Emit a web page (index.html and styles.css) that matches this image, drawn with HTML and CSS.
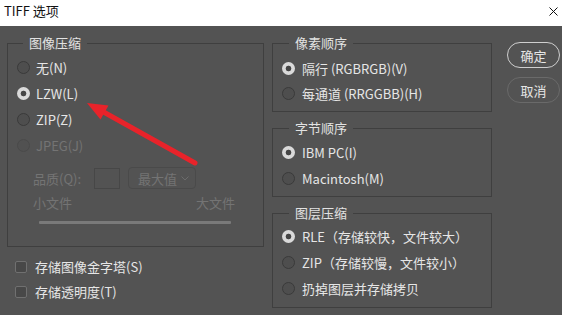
FILE: index.html
```html
<!DOCTYPE html>
<html>
<head>
    <meta charset="utf-8">
    <title>TIFF 选项</title>
    <link rel="stylesheet" href="styles.css">
</head>
<body>
    <!-- Title bar -->
    <div class="titlebar">
        <span class="title">TIFF 选项</span>
        <svg class="close" width="9" height="9" viewBox="0 0 9 9">
            <path d="M0.5 0.5 L8.5 8.5 M8.5 0.5 L0.5 8.5" stroke="#111" stroke-width="1" fill="none"/>
        </svg>
    </div>

    <div class="dialog">
        <!-- Left column -->
        <div class="col-left">
            <fieldset class="group group-image">
                <legend>图像压缩</legend>
                <div class="group-body">
                    <div class="opt"><span class="radio"></span><span>无(N)</span></div>
                    <div class="opt"><span class="radio checked"></span><span>LZW(L)</span></div>
                    <div class="opt"><span class="radio"></span><span>ZIP(Z)</span></div>
                    <div class="opt disabled"><span class="radio"></span><span>JPEG(J)</span></div>
                    <div class="quality">
                        <span class="q-label">品质(Q):</span>
                        <span class="q-input"></span>
                        <span class="q-select">最大值
                            <svg width="8" height="5" viewBox="0 0 8 5"><path d="M0.5 0.5 L4 4 L7.5 0.5" stroke="#6c6c6c" fill="none"/></svg>
                        </span>
                    </div>
                    <div class="sizes"><span>小文件</span><span>大文件</span></div>
                    <div class="slider"></div>
                </div>
            </fieldset>
            <div class="checks">
                <div class="check"><span class="box"></span><span>存储图像金字塔(S)</span></div>
                <div class="check"><span class="box"></span><span>存储透明度(T)</span></div>
            </div>
        </div>

        <!-- Middle column -->
        <div class="col-mid">
            <fieldset class="group group-pixel">
                <legend>像素顺序</legend>
                <div class="group-body">
                    <div class="opt"><span class="radio checked"></span><span>隔行 (RGBRGB)(V)</span></div>
                    <div class="opt"><span class="radio"></span><span>每通道 (RRGGBB)(H)</span></div>
                </div>
            </fieldset>
            <fieldset class="group group-byte">
                <legend>字节顺序</legend>
                <div class="group-body">
                    <div class="opt"><span class="radio checked"></span><span>IBM PC(I)</span></div>
                    <div class="opt"><span class="radio"></span><span>Macintosh(M)</span></div>
                </div>
            </fieldset>
            <fieldset class="group group-layer">
                <legend>图层压缩</legend>
                <div class="group-body">
                    <div class="opt"><span class="radio checked"></span><span>RLE（存储较快，文件较大）</span></div>
                    <div class="opt"><span class="radio"></span><span>ZIP（存储较慢，文件较小）</span></div>
                    <div class="opt"><span class="radio"></span><span>扔掉图层并存储拷贝</span></div>
                </div>
            </fieldset>
        </div>

        <!-- Buttons -->
        <div class="col-btn">
            <button class="btn default">确定</button>
            <button class="btn">取消</button>
        </div>

        <!-- Red annotation arrow -->
        <svg class="arrow" width="562" height="315" viewBox="0 0 562 315">
            <line x1="195" y1="163" x2="100" y2="110" stroke="#e8232a" stroke-width="5" stroke-linecap="round"/>
            <polygon points="87,103 108.5,105.5 100.5,119.5" fill="#e8232a"/>
        </svg>
    </div>
</body>
</html>
```

FILE: styles.css
```css
body {
    margin: 0;
    background: #535353;
    font-family: "Noto Sans CJK SC", "Noto Sans", sans-serif;
    font-size: 13px;
    color: #e6e6e6;
    width: 562px;
    height: 315px;
    overflow: hidden;
}

.titlebar {
    height: 26px;
    background: #ffffff;
    color: #111;
    display: flex;
    align-items: center;
    justify-content: space-between;
    padding: 0 4px 4px 4px;
    box-sizing: border-box;
}

.title {
    font-size: 13px;
    line-height: 16px;
}

.close {
    margin-right: 0;
    margin-top: 0;
}

.dialog {
    display: flex;
    padding: 9px 0 0 7px;
    height: 289px;
    box-sizing: border-box;
}

/* group boxes */
.group {
    margin: 0;
    padding: 0;
    border: 1px solid #3f3f3f;
    min-inline-size: 0;
    box-sizing: border-box;
}

.group legend {
    margin-left: 15px;
    padding: 0 6px;
    line-height: 16px;
    font-size: 13px;
    color: #e2e2e2;
}

.opt {
    display: flex;
    align-items: center;
    white-space: nowrap;
}

.radio {
    width: 13px;
    height: 13px;
    border-radius: 50%;
    box-sizing: border-box;
    border: 1.5px solid #3a3a3a;
    background: #4e4e4e;
    margin-right: 6px;
    flex: none;
}

.radio.checked {
    border: none;
    background: radial-gradient(circle, #454545 0, #454545 2.5px, #dadada 3.2px);
}

.opt.disabled {
    color: #747474;
}

.opt.disabled .radio {
    border-color: #4a4a4a;
    background: #515151;
}

/* left column */
.col-left {
    width: 257px;
    flex: none;
}

.group-image {
    width: 257px;
}

.group-image .group-body {
    padding: 3px 0 22px 9px;
}

.group-image .opt {
    height: 26px;
}

.quality {
    display: flex;
    align-items: center;
    height: 22px;
    margin: 9px 0 0 16px;
    color: #747474;
}

.q-label {
    margin-right: 13px;
}

.q-input {
    width: 26px;
    height: 21px;
    border: 1px solid #474747;
    box-sizing: border-box;
}

.q-select {
    width: 68px;
    height: 22px;
    margin-left: 8px;
    border: 1px solid #4a4a4a;
    border-radius: 4px;
    box-sizing: border-box;
    display: flex;
    align-items: center;
    justify-content: space-between;
    padding: 0 6px 0 9px;
}

.sizes {
    display: flex;
    justify-content: space-between;
    height: 16px;
    line-height: 16px;
    margin: 6px 28px 0 16px;
    color: #747474;
}

.slider {
    height: 3px;
    margin: 10px 32px 0 22px;
    background: #7a7a7a;
    border-radius: 1px;
}

.checks {
    margin-top: 7px;
}

.check {
    display: flex;
    align-items: center;
    height: 25px;
    padding-left: 8px;
    white-space: nowrap;
}

.check .box {
    width: 12px;
    height: 12px;
    border: 1px solid #707070;
    border-radius: 2px;
    background: #484848;
    box-sizing: border-box;
    margin-right: 8px;
}

/* middle column */
.col-mid {
    width: 220px;
    margin-left: 8px;
    flex: none;
    display: flex;
    flex-direction: column;
}

.col-mid .group {
    width: 220px;
}

.col-mid .group legend {
    margin-left: 16px;
}

.col-mid .group-body {
    padding-left: 9px;
}

.col-mid .radio {
    margin-right: 7px;
}

.group-pixel .group-body {
    padding-top: 5px;
    padding-bottom: 5px;
}

.group-pixel .opt {
    height: 25px;
}

.group-byte {
    margin-top: 8px;
}

.group-byte .group-body {
    padding-top: 3px;
    padding-bottom: 5px;
}

.group-byte .opt {
    height: 26px;
}

.group-layer {
    margin-top: 8px;
}

.group-layer .group-body {
    padding-top: 2px;
    padding-bottom: 6px;
}

.group-layer .opt {
    height: 26px;
}

/* buttons */
.col-btn {
    margin-left: 15px;
    padding-top: 7px;
    display: flex;
    flex-direction: column;
    gap: 9px;
}

.btn {
    width: 53px;
    height: 26px;
    border-radius: 13px;
    border: 1.5px solid #6a6a6a;
    background: #535353;
    color: #e6e6e6;
    font-family: "Noto Sans CJK SC", sans-serif;
    font-size: 13px;
    padding: 0;
}

.btn.default {
    border-color: #cfcfcf;
}

.arrow {
    position: absolute;
    left: 0;
    top: 0;
    pointer-events: none;
}
```
